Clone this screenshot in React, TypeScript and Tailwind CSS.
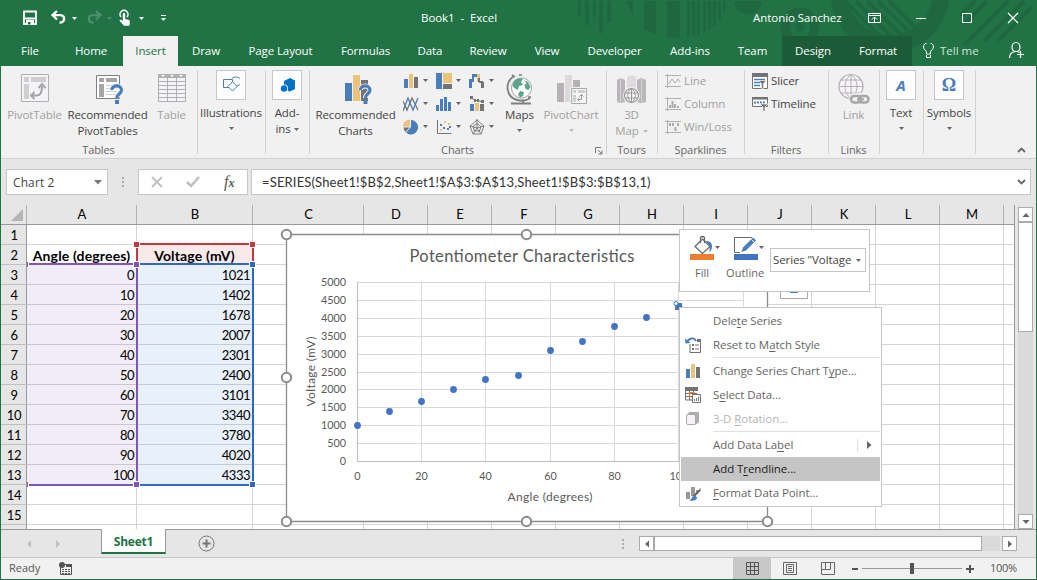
import type { ReactNode } from "react";

type IcProps = { x: number; y: number; w: number; h: number; className?: string; children: ReactNode };

function Ic({ x, y, w, h, className = "", children }: IcProps) {
  return (
    <svg width={w} height={h} viewBox={`${x} ${y} ${w} ${h}`} className={`shrink-0 ${className}`} fill="none">
      {children}
    </svg>
  );
}

function Caret({ className = "text-[#666]" }: { className?: string }) {
  return (
    <svg width="5" height="3" viewBox="0 0 5 3" className={`shrink-0 ${className}`}>
      <path d="M0 0h5L2.5 3z" fill="currentColor" />
    </svg>
  );
}

const BLUE = "#4a7ebb";
const SAND = "#e9c37c";
const DARK = "#737373";

/* ---------- title bar ---------- */

function Pattern() {
  return (
    <svg className="absolute left-[569px] top-0" width="466" height="66" viewBox="570 0 466 66" fill="#1f683f">
      <path d="M578 1h3v16h-3zM585 1h4v24h-4zM593 1h3v16h-3zM599 1h4v32h-4zM607 1h4v21h-4zM626 1h7v15zM644 1h12v33l-12-5zM667 1h13v37l-13-1zM687 1h3v36h-3z" />
      <path d="M692 1h3v35h-3zM697 1h3v34h-3zM703 1h3v32h-3zM708 1h3v29h-3zM713 1h3v25h-3zM718 1h3v19h-3zM723 1h3v11h-3zM734 1h28a14 13 0 0 1-28 0z" />
      <circle cx="800" cy="27" r="15" fill="none" stroke="#1f683f" strokeWidth="9" />
      <circle cx="800" cy="27" r="5" />
      <circle cx="890" cy="-7" r="51" fill="none" stroke="#1f683f" strokeWidth="17" />
      <g stroke="#1f683f" strokeWidth="4">
        <path d="M845 1l42 42M856 1l42 42M867 1l40 40M878 1l36 36M889 1l30 30" />
        <path d="M960 16l15-15M964 24l23-23M964 45l44-44M984 41l40-40M998 41l34-34" />
      </g>
    </svg>
  );
}

function TitleBar() {
  return (
    <div className="relative flex h-[36px] items-center pl-[21px] text-[11.5px] tracking-[-0.15px] text-white">
      <Ic x={22} y={9} w={16} h={18}>
        <path d="M24 11.5h12v12.500h-12z" stroke="#fff" strokeWidth="1.8" />
        <path d="M24 17.500h12v2h-12zM26 20h8v4h-8z" fill="#fff" />
        <path d="M28 22h2.500v2.500h-2.500z" fill="#217346" />
      </Ic>
      <Ic x={50} y={9} w={18} h={18} className="ml-[12px]">
        <path d="M57 11l-4.500 4 4.500 4.500M53 15.200h7.500c5 0 5 7.500-1 7.500" stroke="#fff" strokeWidth="2.300" />
      </Ic>
      <Caret className="ml-[4px] text-white" />
      <Ic x={86} y={9} w={18} h={18} className="ml-[9px]">
        <path d="M96 11l4.500 4-4.500 4.500M100 15.200h-7.500c-5 0-5 7.500 1 7.500" stroke="#4c9069" strokeWidth="2.300" />
      </Ic>
      <Caret className="ml-[3px] text-[#4c9069]" />
      <Ic x={117} y={8} w={16} h={20} className="ml-[5px]">
        <path d="M121 17a4 4 0 1 1 6 0" stroke="#fff" strokeWidth="1.500" />
        <path d="M122.800 13.500q1.200-1.400 2.400 0v5.500l3.800 1q1 .5.900 1.800l-.5 4h-5.500l-4.500-5.300q.8-1.400 2.200-.5l1.200 1z" fill="#fff" />
      </Ic>
      <Caret className="ml-[6px] text-white" />
      <Ic x={158} y={13} w={9} h={10} className="ml-[15px]">
        <path d="M160 15.500h5" stroke="#fff" />
        <path d="M160 18h5l-2.500 3z" fill="#fff" />
      </Ic>
      <span className="ml-[253px] w-[80px] whitespace-pre tracking-[-0.05px]">Book1  -  Excel</span>
      <span className="relative ml-[252px] w-[92px] whitespace-nowrap tracking-[-0.05px]">Antonio Sanchez</span>
      <Ic x={867} y={10} w={15} h={12} className="relative ml-[22px]">
        <path d="M868.500 11.500h12v9h-12zM868.500 13.500h12M874.500 20v-5M872 17.500l2.500-2.500 2.500 2.500" stroke="#fff" />
      </Ic>
      <Ic x={915} y={10} w={12} h={12} className="relative ml-[33px]">
        <path d="M916 16.500h10" stroke="#fff" />
      </Ic>
      <Ic x={961} y={10} w={12} h={12} className="relative ml-[34px]">
        <path d="M962.500 11.500h9v9h-9z" stroke="#fff" />
      </Ic>
      <Ic x={1007} y={10} w={12} h={12} className="relative ml-[34px]">
        <path d="M1008 11l10 10M1018 11l-10 10" stroke="#fff" strokeWidth="1.200" />
      </Ic>
    </div>
  );
}

const tabs: [string, string][] = [
  ["File", "w-[58px]"],
  ["Home", "w-[64px]"],
  ["Insert", "w-[55px] bg-[#f1f1f1] text-[#217346]"],
  ["Draw", "w-[56px]"],
  ["Page Layout", "w-[93px]"],
  ["Formulas", "w-[77px]"],
  ["Data", "w-[52px]"],
  ["Review", "w-[64px]"],
  ["View", "w-[54px]"],
  ["Developer", "w-[81px]"],
  ["Add-ins", "w-[70px]"],
  ["Team", "w-[57px] pr-[2px]"],
  ["Design", "w-[62px] bg-[#1c5b38]"],
  ["Format", "w-[68px] bg-[#1c5b38]"],
];

function TabRow() {
  return (
    <div className="relative flex h-[30px] text-[11.5px] tracking-[-0.1px] text-white">
      {tabs.map(([t, c]) => (
        <div key={t} className={`flex items-center justify-center whitespace-nowrap ${c}`}>
          {t}
        </div>
      ))}
      <div className="flex items-center gap-[6px] pl-[11px] text-[#d3e3da]">
        <Ic x={923} y={42} w={11} h={16}>
          <path d="M926.500 53v-2c0-1.500-3-2.500-3-5a5 4.500 0 0 1 10 0c0 2.500-3 3.500-3 5v2zM926.500 54v2.500h4v-2.500" stroke="#fff" />
        </Ic>
        <span className="tracking-[0px]">Tell me</span>
      </div>
      <Ic x={1008} y={41} w={17} h={18} className="ml-auto mr-[11px] mt-[5px]">
        <path d="M1012 47a4 4.500 0 1 1 8 0c0 3-2 4.500-4 4.500s-4-1.500-4-4.500zM1009.500 58c0-4 3-6 5.500-6.500M1020.500 51v7M1017 54.500h7M1017.500 51.500l2 1" stroke="#fff" strokeWidth="1.200" />
      </Ic>
    </div>
  );
}

/* ---------- ribbon icons ---------- */

function Question({ x, y }: { x: number; y: number }) {
  return (
    <g transform={`translate(${x} ${y})`}>
      <path d="M1.800 6c0-5.500 9.700-5.500 9.700 0 0 4-4.700 4-4.700 8" stroke="#f1f1f1" strokeWidth="5" />
      <path d="M1.800 6c0-5.500 9.700-5.500 9.700 0 0 4-4.700 4-4.700 8" stroke={BLUE} strokeWidth="3.200" />
      <path d="M5 16h4v4h-4z" fill={BLUE} />
    </g>
  );
}

const PivotIcon = (
  <Ic x={19} y={73} w={31} h={31}>
    <path d="M21.500 74.500h27v27h-27z" fill="#f6f3f8" stroke="#b0b0b0" />
    <path d="M24 77h5v5h-5zM24 84h5v15h-5zM31 77h15v5h-15z" fill="#cfcfcf" />
    <path d="M31.500 95.500h5c4 0 5.500-3 5.500-9M34.500 92l-3.500 3.500 3.500 3.500M38.500 88l3.500-4 3.500 4" stroke="#a5a5a5" strokeWidth="2" />
  </Ic>
);

const RecPivotIcon = (
  <Ic x={91} y={73} w={33} h={31}>
    <path d="M96.500 75.500h23v23h-23z" fill="#fff" stroke="#808080" />
    <path d="M99 78h5v4h-5zM99 84h5v13h-5zM106 78h11v4h-11z" fill="#a6a6a6" />
    <path d="M106 85.500h11M106 88.500h11M106 91.500h11M106 94.500h11" stroke="#d0d0d0" />
    <Question x={110} y={84} />
  </Ic>
);

const TableIcon = (
  <Ic x={156} y={73} w={31} h={31}>
    <path d="M158 74h28v28h-28z" fill="#b0b0b0" />
    <path d="M159 78h8v3h-8zM168 78h8v3h-8zM177 78h8v3h-8zM159 82h8v3h-8zM168 82h8v3h-8zM177 82h8v3h-8zM159 86h8v3h-8zM168 86h8v3h-8zM177 86h8v3h-8zM159 90h8v3h-8zM168 90h8v3h-8zM177 90h8v3h-8zM159 94h8v3h-8zM168 94h8v3h-8zM177 94h8v3h-8zM159 98h8v3h-8zM168 98h8v3h-8zM177 98h8v3h-8z" fill="#f6f3f8" />
    <path d="M161 75h4l-2 2zM170 75h4l-2 2zM179 75h4l-2 2z" fill="#fff" />
  </Ic>
);

const RecChartIcon = (
  <Ic x={338} y={73} w={35} h={31}>
    <path d="M345 83h7v18h-7z" fill={BLUE} />
    <path d="M353 75h7v26h-7z" fill={SAND} />
    <path d="M361 80h7v21h-7z" fill={DARK} />
    <Question x={358.500} y={84} />
  </Ic>
);

const smallCharts: ReactNode[] = [
  <g key="bars">
    <path d="M1 6h4v9h-4z" fill={BLUE} />
    <path d="M6 1h4v14h-4z" fill={SAND} />
    <path d="M11 4h4v11h-4z" fill={DARK} />
  </g>,
  <g key="tree">
    <path d="M0 0h6v16h-6z" fill={BLUE} />
    <path d="M7 0h9v10h-9z" fill={SAND} />
    <path d="M7 11h9v5h-9z" fill={DARK} />
  </g>,
  <g key="waterfall">
    <path d="M0 6h3v9h-3zM4 1h4v3h-4zM3 1h2v8h-2z" fill={BLUE} />
    <path d="M8 1h3v8h-3z" fill={SAND} />
    <path d="M9 5h2v4h-2zM12 9h3v6h-3zM10 8h4v2h-4z" fill={DARK} />
  </g>,
  <g key="line" strokeWidth="1.300">
    <path d="M0 5l4 9 5-12 6 12" stroke={DARK} />
    <path d="M0 15l5-13 5 12 5-12" stroke={BLUE} />
  </g>,
  <g key="hist">
    <path d="M0 9h3v6h-3zM4 3h3v12h-3zM8 1h3v14h-3zM12 6h3v9h-3z" fill={BLUE} />
  </g>,
  <g key="combo">
    <path d="M1 8h4v7h-4z" fill={BLUE} />
    <path d="M6 7h4v8h-4z" fill={SAND} />
    <path d="M11 8h4v7h-4z" fill={DARK} />
    <path d="M2 1.500l4 3h3l5 1.500" stroke={DARK} />
    <path d="M1 0h3v3h-3zM5 3h2v3h-2zM8 3h2v3h-2zM12 4h3v3h-3z" fill={DARK} />
  </g>,
  <g key="pie">
    <path d="M8 8V1a7.200 7.200 0 1 1-5 12.500z" fill={BLUE} />
    <path d="M7 7.500H0A7 7 0 0 1 7 .5z" fill={SAND} />
    <path d="M6.500 8.500H.500a7 7 0 0 0 2 4.500z" fill={DARK} />
  </g>,
  <g key="scatter">
    <path d="M1.500 1v13.500h14" stroke={DARK} />
    <path d="M4 5h2v2h-2zM7 8h2v2h-2zM11 9h2v2h-2z" fill={BLUE} />
    <path d="M8 2h2v2h-2zM12 4h2v2h-2zM4 10h2v2h-2z" fill={SAND} />
    <path d="M13 7h2v2h-2z" fill={BLUE} />
  </g>,
  <g key="radar" stroke={DARK}>
    <path d="M8 1l7 6-3 8H4L1 7zM8 4.500l4 3-1.500 4.500h-5L4 7.500zM8 0v9M8 9l7-2M8 9l4 6M8 9l-4 6M8 9L1 7" strokeWidth=".9" />
  </g>,
];

const MapsIcon = (
  <Ic x={504} y={72} w={31} h={32}>
    <circle cx="521.500" cy="87" r="10" fill="#fff" stroke="#8a8a8a" strokeWidth=".8" />
    <path d="M514 80c3-3 7-3.500 9-2l-2 3 2 3-4 1-1 4-4-2-1.500-3zM524 79l4 2 2.500 5-2 3-3-1-1-4 2-2zM520 90l4 1-1 4-3 1.500-2-3z" fill="#5ba58a" />
    <path d="M513.500 75.500c-9 5-8.500 22 6 24h4c4-.5 6.500-2 6.500-3.500M512 74l3 2M523 99v3M511 102.500h20" stroke="#808080" strokeWidth="1.800" />
    <path d="M519 74h3M528 96h3" stroke="#808080" strokeWidth="1.500" />
  </Ic>
);

const PivotChartIcon = (
  <Ic x={554} y={73} w={34} h={31}>
    <path d="M557 83h7v19h-7zM573 80h7v22h-7z" fill="#b5b2b5" />
    <path d="M565 75h7v27h-7z" fill="#dcd8dc" />
    <path d="M570 87h18v17h-18z" fill="#f1f1f1" />
    <path d="M571.500 88.500h15v15h-15z" fill="#f7f4f8" stroke="#aaa" />
    <path d="M573 90h3v3h-3zM578 90h7v3h-7zM573 95h3v7h-3z" fill="#cfcfcf" />
    <path d="M578 99.500h3.500v-4.500M579.500 97.500l-2 2 2 2M579.500 96.500l2-2 2 2" stroke="#999" />
  </Ic>
);

const Map3DIcon = (
  <Ic x={616} y={72} w={31} h={32}>
    <path d="M617 79l4-2 4 2v22l-4 1-4-1zM637 79l4-2 5 2v22l-5 1-4-1z" fill="#b9b6b9" />
    <path d="M627 76l4.500-2 4.500 2v20h-9z" fill="#dedade" />
    <path d="M620.500 78v23M641.500 78v23" stroke="#d6d3d6" />
    <circle cx="631.500" cy="94.500" r="8.500" fill="#f1f1f1" />
    <circle cx="631.500" cy="94.500" r="7" stroke="#999" strokeWidth="1.200" fill="#f7f4f8" />
    <path d="M631.500 87.500v14M625 92h13M625 97h13M631.500 87.500c-5 3-5 11 0 14M631.500 87.500c5 3 5 11 0 14" stroke="#999" />
  </Ic>
);

const LinkIcon = (
  <Ic x={837} y={73} w={33} h={32}>
    <circle cx="851" cy="86.500" r="12" stroke="#b2b0b2" strokeWidth="1.200" fill="#f7f4f8" />
    <path d="M851 74.500v24M839 86.500h24M841 80h20M841 93h20M851 74.500c-8 6-8 18 0 24M851 74.500c8 6 8 18 0 24" stroke="#b2b0b2" />
    <rect x="849" y="93" width="22" height="12" rx="6" fill="#f1f1f1" />
    <rect x="851" y="96" width="10" height="6.500" rx="3.200" stroke="#a8a8a8" strokeWidth="2.500" />
    <rect x="859" y="96" width="9.500" height="6.500" rx="3.200" stroke="#a8a8a8" strokeWidth="2.500" />
    <path d="M857 99.300h7" stroke="#a8a8a8" strokeWidth="2.200" />
  </Ic>
);

/* ---------- ribbon ---------- */

function Group({ w, label, children, extra }: { w: string; label?: string; children: ReactNode; extra?: ReactNode }) {
  return (
    <>
      <div className={`flex shrink-0 flex-col ${w}`}>
        <div className="flex h-[76px]">{children}</div>
        <div className="relative flex h-[16px] items-center justify-center pr-px text-[11px] tracking-[-0.1px] text-[#666]">
          {label}
          {extra}
        </div>
      </div>
      <div className="mt-[4px] h-[84px] w-px shrink-0 bg-[#d2d2d2]" />
    </>
  );
}

function Big({ w, icon, lines, arrow, inlineArrow, off }: { w: string; icon: ReactNode; lines: string[]; arrow?: boolean; inlineArrow?: boolean; off?: boolean }) {
  const color = off ? "text-[#a0a0a0]" : "text-[#444]";
  const ac = off ? "text-[#bbb]" : "text-[#666]";
  return (
    <div className={`flex shrink-0 flex-col items-center pr-px pt-[7px] leading-[16px] ${w} ${color}`}>
      <div className="flex h-[34px] items-start">{icon}</div>
      {lines.map((l, i) => (
        <div key={l} className="flex items-center gap-[4px] whitespace-nowrap">
          {l}
          {inlineArrow && i === lines.length - 1 && <Caret className={ac} />}
        </div>
      ))}
      {arrow && <Caret className={`mt-[6px] ${ac}`} />}
    </div>
  );
}

function Boxed({ icon, lines, arrow }: { icon: ReactNode; lines: string[]; arrow?: boolean }) {
  return (
    <div className="flex w-full flex-col items-center pr-px pt-[4px] leading-[16px] text-[#444]">
      <div className="mb-[5px] flex h-[30px] w-[30px] shrink-0 items-center justify-center border border-[#c6c6c6] bg-[#fdfdfd]">{icon}</div>
      {lines.map((l, i) => (
        <div key={l} className="flex items-center gap-[3px] whitespace-nowrap">
          {l}
          {!arrow && i === lines.length - 1 && <Caret />}
        </div>
      ))}
      {arrow && <Caret className="mt-[6px] text-[#666]" />}
    </div>
  );
}

function Spark({ label, children }: { label: string; children: ReactNode }) {
  return (
    <div className="flex h-[23px] items-center gap-[3px] text-[#a0a0a0]">
      <Ic x={0} y={0} w={16} h={14}>
        <path d="M2.500 0v14M0 1.500h16M0 12.500h16" stroke="#b0b0b0" />
        {children}
      </Ic>
      {label}
    </div>
  );
}

function Ribbon() {
  return (
    <div className="flex h-[92px] bg-[#f1f1f1] text-[11.5px] tracking-[-0.1px]">
      <Group w="w-[196px]" label="Tables">
        <Big w="w-[68px]" icon={PivotIcon} lines={["PivotTable"]} off />
        <Big w="w-[78px]" icon={RecPivotIcon} lines={["Recommended", "PivotTables"]} />
        <Big w="w-[50px]" icon={TableIcon} lines={["Table"]} off />
      </Group>
      <Group w="w-[67px]">
        <Boxed
          lines={["Illustrations"]}
          arrow
          icon={
            <Ic x={223} y={77} w={18} h={18}>
              <path d="M232 81.500a5 4.500 0 1 1 5 5.500" stroke={BLUE} />
              <path d="M224.500 80.500h9v8h-9z" stroke={BLUE} fill="#fdfdfd" />
              <path d="M233.500 82.500l4.500 5-4.500 4.500-4.500-4.500z" stroke={BLUE} fill="#fdfdfd" />
            </Ic>
          }
        />
      </Group>
      <Group w="w-[43px]">
        <Boxed
          lines={["Add-", "ins"]}
          icon={
            <Ic x={279} y={77} w={16} h={16}>
              <path d="M284 81l6-3 5 2.500v8.500l-5 2.500-6-2z" fill="#0072c6" />
              <circle cx="284" cy="88.500" r="4" fill="#fdfdfd" />
              <circle cx="284" cy="88.500" r="3.200" fill="#0072c6" />
            </Ic>
          }
        />
      </Group>
      <Group
        w="w-[296px]"
        label="Charts"
        extra={
          <Ic x={0} y={0} w={8} h={8} className="absolute right-[3px] top-[5px]">
            <path d="M.5 6V.500H6M3 3l4 4M7 3.500V7H3.500" stroke="#777" />
          </Ic>
        }
      >
        <Big w="w-[92px]" icon={RecChartIcon} lines={["Recommended", "Charts"]} />
        <div className="-mr-px grid w-[100px] grid-cols-3 grid-rows-[23px_23px_23px] pl-px pt-[3px]">
          {smallCharts.map((c, i) => (
            <div key={i} className="flex items-center gap-[3px]">
              <Ic x={0} y={0} w={17} h={16}>
                {c}
              </Ic>
              <Caret />
            </div>
          ))}
        </div>
        <Big w="w-[38px]" icon={MapsIcon} lines={["Maps"]} arrow />
        <Big w="w-[65px]" icon={PivotChartIcon} lines={["PivotChart"]} arrow off />
      </Group>
      <Group w="w-[50px]" label="Tours">
        <Big w="w-[50px]" icon={Map3DIcon} lines={["3D", "Map"]} inlineArrow off />
      </Group>
      <Group w="w-[86px]" label="Sparklines">
        <div className="pl-[7px] pt-[3px]">
          <Spark label="Line">
            <path d="M4 10l3-5 3 4 3-4 2 3" stroke="#aaa" />
          </Spark>
          <Spark label="Column">
            <path d="M5 11v-3M7.500 11v-7M10 11v-4M13 11v-2" stroke="#aaa" strokeWidth="2" />
          </Spark>
          <Spark label="Win/Loss">
            <path d="M5 3v3M8 3v3M10.500 7v4M13 3v3" stroke="#aaa" strokeWidth="2" />
          </Spark>
        </div>
      </Group>
      <Group w="w-[83px]" label="Filters">
        <div className="pl-[7px] pt-[3px] text-[#444]">
          <div className="flex h-[23px] items-center gap-[3px]">
            <Ic x={0} y={0} w={16} h={16}>
              <path d="M.5.500h15v15H.500z" fill="#fff" stroke={DARK} />
              <path d="M0 0h16v4H0z" fill={DARK} />
              <path d="M2 6.500h11M2 9.500h6M2 12.500h6" stroke={BLUE} strokeWidth="1.500" />
              <path d="M6.500 7.500h8l-3 3v5h-2v-5z" fill={DARK} stroke="#fff" strokeWidth=".6" />
            </Ic>
            Slicer
          </div>
          <div className="flex h-[23px] items-center gap-[3px]">
            <Ic x={0} y={0} w={16} h={14}>
              <path d="M.5.500h15v9H.500z" fill="#fff" stroke={DARK} />
              <path d="M0 0h16v2.500H0z" fill={DARK} />
              <path d="M2 5.500h11" stroke={BLUE} strokeWidth="2" strokeDasharray="2 1" />
              <path d="M8 7h8l-3 3v4h-2v-4z" fill={DARK} stroke="#fff" strokeWidth=".6" />
            </Ic>
            Timeline
          </div>
        </div>
      </Group>
      <Group w="w-[50px]" label="Links">
        <Big w="w-[50px]" icon={LinkIcon} lines={["Link"]} off />
      </Group>
      <Group w="w-[43px]">
        <Boxed lines={["Text"]} arrow icon={<span className="font-['Open_Sans',sans-serif] text-[15px] font-bold italic text-[#4a7ebb]">A</span>} />
      </Group>
      <Group w="w-[51px]">
        <Boxed lines={["Symbols"]} arrow icon={<span className="font-['Liberation_Serif',serif] text-[18px] font-bold text-[#4a7ebb]">Ω</span>} />
      </Group>
      <Ic x={0} y={0} w={9} h={6} className="ml-auto mr-[10px] mt-[81px]">
        <path d="M1 5l3.500-3.500L8 5" stroke="#666" strokeWidth="1.800" />
      </Ic>
    </div>
  );
}

/* ---------- formula bar ---------- */

function FormulaBar() {
  return (
    <div className="flex h-[46px] shrink-0 items-start border-t border-[#d2d2d2] bg-[#e6e6e6] pl-[5px] pt-[10px] font-['Lato',sans-serif] text-[13px] text-[#333]">
      <div className="flex h-[26px] w-[102px] items-center justify-between border border-[#c6c6c6] bg-white pl-[6px] pr-[5px] font-['Open_Sans',sans-serif] text-[12px] text-[#444]">
        <span className="pt-px tracking-[0.1px]">Chart 2</span>
        <svg width="8" height="5" viewBox="0 0 8 5">
          <path d="M0 0h8L4 4.500z" fill="#777" />
        </svg>
      </div>
      <Ic x={0} y={0} w={3} h={12} className="ml-[14px] mt-[7px]">
        <path d="M0 1h2v2H0zM0 5h2v2H0zM0 9h2v2H0z" fill="#aaa" />
      </Ic>
      <div className="ml-[13px] flex h-[26px] w-[110px] items-center border border-[#c6c6c6] bg-white">
        <Ic x={0} y={0} w={12} h={12} className="ml-[12px]">
          <path d="M1 1l10 10M11 1L1 11" stroke="#c0c0c0" strokeWidth="1.800" />
        </Ic>
        <Ic x={0} y={0} w={14} h={12} className="ml-[23px]">
          <path d="M1 6l4 4L13 1" stroke="#c0c0c0" strokeWidth="2.500" />
        </Ic>
        <span className="ml-[24px] font-['Liberation_Serif',serif] text-[16px] italic leading-[16px] text-[#555]">
          f<span className="text-[12px] font-bold">x</span>
        </span>
      </div>
      <div className="ml-[3px] flex h-[26px] w-[780px] items-center justify-between border border-[#c6c6c6] bg-white pl-[10px] pr-[4px]">
        <span className="whitespace-nowrap pt-[2px] tracking-[0.15px]">=SERIES(Sheet1!$B$2,Sheet1!$A$3:$A$13,Sheet1!$B$3:$B$13,1)</span>
        <Ic x={0} y={0} w={9} h={6}>
          <path d="M1 1l3.500 3.500L8 1" stroke="#666" strokeWidth="1.800" />
        </Ic>
      </div>
    </div>
  );
}

/* ---------- sheet ---------- */

const angles = [0, 10, 20, 30, 40, 50, 60, 70, 80, 90, 100];
const volts = [1021, 1402, 1678, 2007, 2301, 2400, 3101, 3340, 3780, 4020, 4333];

const columns: [string, string][] = [
  ["A", "w-[110px]"],
  ["B", "w-[116px]"],
  ["C", "w-[111px]"],
  ["D", "w-[64px]"],
  ["E", "w-[64px]"],
  ["F", "w-[64px]"],
  ["G", "w-[64px]"],
  ["H", "w-[64px]"],
  ["I", "w-[64px]"],
  ["J", "w-[64px]"],
  ["K", "w-[64px]"],
  ["L", "w-[64px]"],
  ["M", "w-[64px]"],
  ["", "w-[11px]"],
];

function cellText(col: string, row: number) {
  if (row === 2) return col === "A" ? "Angle (degrees)" : col === "B" ? "Voltage (mV)" : "";
  if (row < 3 || row > 13) return "";
  return col === "A" ? String(angles[row - 3]) : col === "B" ? String(volts[row - 3]) : "";
}

function cellTone(col: string, row: number) {
  if (row === 2 && col === "B") return "bg-[#f9e9e9] border-[#d8cccc]";
  if (row > 2 && row < 14 && col === "A") return "bg-[#f1edf8] border-[#c9c5d3]";
  if (row > 2 && row < 14 && col === "B") return "bg-[#e8f0fa] border-[#c3cbd6]";
  return "border-[#d4d4d4]";
}

function Sheet() {
  return (
    <div className="h-[325px] w-[1014px] overflow-hidden border-r border-[#999] bg-white font-['Lato',sans-serif] text-[13px] text-black">
      <div className="flex h-[20px] border-b border-[#999] bg-[#e6e6e6]">
        <div className="flex w-[26px] shrink-0 items-end justify-end border-r border-[#b1b1b1] pb-[3px] pr-[3px]">
          <svg width="12" height="12" viewBox="0 0 12 12">
            <path d="M12 0v12H0z" fill="#b4b4b4" />
          </svg>
        </div>
        {columns.map(([c, w]) => (
          <div key={c} className={`flex shrink-0 items-center justify-center border-r border-[#b1b1b1] pl-px last:border-r-0 ${w}`}>
            {c}
          </div>
        ))}
      </div>
      {Array.from({ length: 16 }, (_, i) => i + 1).map((row) => (
        <div key={row} className="flex h-[20px]">
          <div className="flex w-[26px] shrink-0 items-center justify-center border-b border-r border-b-[#c0c0c0] border-r-[#999] bg-[#e6e6e6] pl-px pt-[2px] tracking-[-0.4px]">{row < 16 ? row : ""}</div>
          {columns.map(([c, w]) => (
            <div
              key={c}
              className={`flex shrink-0 items-center border-b border-r pt-[2px] last:border-r-0 ${w} ${cellTone(c, row)} ${
                row === 2 ? "justify-center whitespace-nowrap text-[14px] font-bold tracking-[0.15px]" : "justify-end pr-[2px] tracking-[-0.5px]"
              }`}
            >
              {cellText(c, row)}
            </div>
          ))}
        </div>
      ))}
    </div>
  );
}

function RangeMarks() {
  return (
    <svg className="absolute left-[27px] top-[240px]" width="232" height="250" viewBox="27 240 232 250" fill="none" shapeRendering="crispEdges">
      <path d="M137 244h116v20" stroke="#c4373f" strokeWidth="2" />
      <path d="M137 244v20" stroke="#c4373f" strokeWidth="2" />
      <path d="M137 264h116v221H137" stroke="#3068c6" strokeWidth="2" />
      <path d="M27 264h110v221H27" stroke="#8055b7" strokeWidth="2" />
      <g stroke="#fff">
        <path d="M133.500 241.500h6v6h-6zM249.500 241.500h6v6h-6z" fill="#c4373f" />
        <path d="M133.500 261.500h6v6h-6zM133.500 481.500h6v6h-6zM23.500 261.500h5v6h-5zM23.500 481.500h5v6h-5z" fill="#8055b7" />
        <path d="M249.500 261.500h6v6h-6zM249.500 481.500h6v6h-6z" fill="#3068c6" />
      </g>
    </svg>
  );
}

/* ---------- embedded chart ---------- */

const plotX = [357.5, 389.5, 421.5, 453.5, 485.5, 518.5, 550.5, 582.5, 614.5, 646.5, 678.5];
const plotY = [425.5, 411.5, 401.5, 389.5, 379.5, 375.5, 350.5, 341.5, 326.5, 317.5, 306.5];

function Chart() {
  const rows = Array.from({ length: 11 }, (_, i) => Math.round(282 + i * 17.9) + 0.5);
  const cols = [421.5, 485.5, 550.5, 614.5, 678.5, 743.5];
  return (
    <svg className="absolute left-[280px] top-[228px] font-['Lato',sans-serif]" width="494" height="300" viewBox="280 228 494 300" fill="#595959">
      <path d="M286.500 234.500h481v287h-481z" fill="#fff" stroke="#8c8c8c" strokeWidth="1.300" />
      <g stroke="#d9d9d9">
        {rows.map((y) => (
          <path key={y} d={`M357 ${y}h387`} />
        ))}
        {cols.map((x) => (
          <path key={x} d={`M${x} 282v180`} />
        ))}
      </g>
      <path d="M357.500 282v179.500h387" fill="none" stroke="#bfbfbf" />
      <text x="522" y="262" textAnchor="middle" fontSize="16.500" textLength="225">
        Potentiometer Characteristics
      </text>
      <g fontSize="10.800" textAnchor="end">
        {rows.map((y, i) => (
          <text key={y} x="346" y={y + 3}>
            {5000 - i * 500}
          </text>
        ))}
      </g>
      <g fontSize="10.800" textAnchor="middle">
        {[357.5, 421.5, 485.5, 550.5, 614.5, 679].map((x, i) => (
          <text key={x} x={x} y="480">
            {i * 20}
          </text>
        ))}
      </g>
      <text x="550" y="501" textAnchor="middle" fontSize="12" textLength="85">
        Angle (degrees)
      </text>
      <text transform="translate(315 371.500) rotate(-90)" textAnchor="middle" fontSize="12" textLength="70">
        Voltage (mV)
      </text>
      <g fill="#4472c4">
        {plotX.map((x, i) => (
          <circle key={x} cx={x} cy={plotY[i]} r="3.400" />
        ))}
      </g>
      <path d="M675 303h7v7h-7z" fill="#6b7686" />
      <circle cx="679.500" cy="307" r="3" fill="#4472c4" />
      <circle cx="676" cy="303.500" r="2" fill="#fff" stroke="#1e88d8" />
      <g fill="#fff" stroke="#8c8c8c" strokeWidth="2">
        {[
          [286.5, 234.5],
          [526.5, 234.5],
          [286.5, 377.5],
          [286.5, 521.5],
          [526.5, 521.5],
          [767.5, 521.5],
        ].map(([x, y]) => (
          <circle key={`${x}-${y}`} cx={x} cy={y} r="4.700" />
        ))}
      </g>
    </svg>
  );
}

/* ---------- floating tools ---------- */

function MiniToolbar() {
  return (
    <div className="absolute left-[679px] top-[229px] flex h-[63px] w-[191px] border border-[#c6c6c6] bg-white text-[11px] text-[#666]">
      <div className="flex w-[47px] flex-col pl-[10px] pt-[5px]">
        <Ic x={690} y={235} w={31} h={26}>
          <path d="M702.500 239l7.500 7.500-7.500 7-7.500-7zM700.500 243v-5.500q2-2 4 0V243" stroke="#666" strokeWidth="1.200" />
          <path d="M706 241c5 0 6 3 6 5.500s-1 4-2.500 6q0-5 .5-6z" fill={BLUE} />
          <path d="M690 254h24v6h-24z" fill="#ed7d31" />
          <path d="M715 246h5l-2.500 3z" fill="#666" />
        </Ic>
        <span className="ml-[5px] mt-[4px]">Fill</span>
      </div>
      <div className="flex w-[40px] flex-col pl-[7px] pt-[5px]">
        <Ic x={734} y={235} w={31} h={26}>
          <path d="M752 237.500h-17.500v15H740" stroke="#666" />
          <path d="M741.500 252l1.500-4.500 10-10 3 3-10 10z" fill={BLUE} />
          <path d="M751.500 239.500l3 3" stroke="#fff" />
          <path d="M734 254h24v6h-24z" fill="#4472c4" />
          <path d="M759 246h5l-2.500 3z" fill="#666" />
        </Ic>
        <span className="ml-[-8px] mt-[4px] tracking-[0.1px]">Outline</span>
      </div>
      <div className="ml-[3px] mt-[18px] flex h-[24px] w-[96px] items-center justify-between border border-[#c6c6c6] pl-[2px] pr-[4px] text-[11.5px] tracking-[-0.1px] text-[#444]">
        <span className="whitespace-nowrap">Series "Voltage</span>
        <Caret />
      </div>
    </div>
  );
}

function Item({ pre, u, post, icon, state = "", tail }: { pre: string; u: string; post: string; icon?: ReactNode; state?: string; tail?: ReactNode }) {
  return (
    <div className={`mx-px flex h-[24px] items-center ${state}`}>
      <div className="flex w-[32px] shrink-0 pl-[4px]">{icon}</div>
      <span className="whitespace-nowrap">
        {pre}
        <span className="underline underline-offset-2">{u}</span>
        {post}
      </span>
      {tail}
    </div>
  );
}

function ContextMenu() {
  return (
    <div className="absolute left-[679px] top-[307px] h-[200px] w-[203px] border border-[#c6c6c6] bg-white pt-px text-[11.5px] tracking-[-0.08px] text-[#666]">
      <Item pre="Dele" u="t" post="e Series" />
      <Item
        pre="Reset to M"
        u="a"
        post="tch Style"
        icon={
          <Ic x={0} y={0} w={16} h={16}>
            <path d="M2 5c2-4 7-5 9-1" stroke={BLUE} strokeWidth="1.800" />
            <path d="M0 1.500l.5 5 5-.5z" fill={BLUE} />
            <path d="M5 7v8.500h10.500v-12H12" stroke={DARK} />
            <path d="M12 2h4v3h-4zM7 7h2v2H7zM7 11h2v2H7zM10 7.500h4v1h-4zM10 11.500h4v1h-4z" fill={DARK} />
          </Ic>
        }
      />
      <div className="ml-[33px] mr-px h-[2px] border-t border-[#e1e1e1]" />
      <Item pre="Change Series Chart T" u="y" post="pe..." icon={<Ic x={0} y={0} w={16} h={16}>{smallCharts[0]}</Ic>} />
      <Item
        pre="S"
        u="e"
        post="lect Data..."
        icon={
          <Ic x={0} y={0} w={16} h={16}>
            <path d="M0 0h13v4H0z" fill={DARK} />
            <path d="M.5 3v10H7M.500 6.500H12M.500 9.500H7M4.500 4v9M8.500 4v3" stroke={DARK} />
            <path d="M4.500 10V5.500h5" stroke="#ed7d31" strokeWidth="1.200" />
            <path d="M7.500 7.500h8v8h-8z" fill="#fff" stroke={DARK} />
            <path d="M9.500 14v-2M11.500 14v-3M13.500 14V9.500" stroke={DARK} />
          </Ic>
        }
      />
      <Item
        pre="3-D "
        u="R"
        post="otation..."
        state="text-[#b5b5b5]"
        icon={
          <Ic x={0} y={0} w={16} h={16}>
            <path d="M2 3.500L5 1.500h8.500v9.500l-3 2.500" fill="#b0b0b0" stroke="#aaa" />
            <rect x="1.500" y="3.500" width="9" height="10" rx="1.500" fill="#f7f4f8" stroke="#aaa" />
          </Ic>
        }
      />
      <div className="ml-[33px] mr-px h-[2px] border-t border-[#e1e1e1]" />
      <Item
        pre="Add Data La"
        u="b"
        post="el"
        tail={
          <div className="ml-auto flex h-[13px] items-center border-l border-[#e1e1e1] pl-[9px] pr-[8px]">
            <svg width="5" height="8" viewBox="0 0 5 8">
              <path d="M0 0l4.500 4L0 8z" fill="#666" />
            </svg>
          </div>
        }
      />
      <Item pre="Add T" u="r" post="endline..." state="bg-[#c5c5c5] text-[#222]" />
      <Item
        pre=""
        u="F"
        post="ormat Data Point..."
        icon={
          <Ic x={0} y={0} w={16} h={16}>
            <path d="M1 7h4v7H1zM6 2h4v9H6zM11 5h2v4h-2z" fill="#999" />
            <path d="M15.500 3v3l-6 6-1.500-1.500z" fill="#666" />
            <path d="M4 15.500c3-1 3-5 6-5l2 2c0 3-4 3.500-8 3z" fill={BLUE} />
          </Ic>
        }
      />
    </div>
  );
}

/* ---------- scrollbars and bottom bars ---------- */

function ScrollBtn({ d }: { d: string }) {
  return (
    <div className="flex h-[15px] w-[15px] shrink-0 items-center justify-center border border-[#ababab] bg-white">
      <svg width="8" height="8" viewBox="0 0 8 8">
        <path d={d} fill="#666" />
      </svg>
    </div>
  );
}

function VScroll() {
  return (
    <div className="ml-[3px] mt-[2px] flex h-[322px] w-[15px] flex-col bg-[#dadada]">
      <ScrollBtn d="M.5 6h7L4 2z" />
      <div className="h-[110px] border border-[#ababab] bg-white" />
      <div className="flex-1" />
      <ScrollBtn d="M.5 2h7L4 6z" />
    </div>
  );
}

function SheetTabs() {
  return (
    <div className="flex h-[29px] shrink-0 border-b border-t border-b-[#c6c6c6] border-t-[#999] bg-[#e6e6e6]">
      <div className="flex w-[100px] items-center pl-[26px]">
        <svg width="34" height="8" viewBox="0 0 34 8">
          <path d="M4 0v8L0 4zM29 0v8l4-4z" fill="#c0c0c0" />
        </svg>
      </div>
      <div className="-mt-px flex h-[25px] w-[65px] items-center justify-center border-x border-b-2 border-x-[#999] border-b-[#217346] bg-white pt-[3px] text-[12px] font-bold tracking-[-0.2px] text-[#217346]">Sheet1</div>
      <Ic x={0} y={0} w={17} h={17} className="ml-[32px] mt-[5px]">
        <circle cx="8.500" cy="8.500" r="7.500" stroke="#777" />
        <path d="M8.500 4.500v8M4.500 8.500h8" stroke="#777" strokeWidth="2" />
      </Ic>
      <div className="ml-auto mr-[19px] flex items-center">
        <Ic x={0} y={0} w={3} h={12} className="mr-[14px]">
          <path d="M0 1h2v2H0zM0 5h2v2H0zM0 9h2v2H0z" fill="#aaa" />
        </Ic>
        <ScrollBtn d="M6 .5v7L2 4z" />
        <div className="h-[15px] w-[328px] border border-[#ababab] bg-white" />
        <div className="mr-[2px] h-[15px] w-[18px] bg-[#dadada]" />
        <ScrollBtn d="M2 .5v7L6 4z" />
      </div>
    </div>
  );
}

function StatusBar() {
  return (
    <div className="flex h-[21px] items-center bg-[#f1f1f1] pl-[8px] text-[11px] text-[#555]">
      <span className="w-[50px] pb-px">Ready</span>
      <Ic x={0} y={0} w={13} h={13}>
        <path d="M1.500 5v7.500h11V2.500H6" stroke="#555" />
        <circle cx="3" cy="3" r="3" fill="#555" />
        <path d="M7 2h6v3H7zM3 7h2v1H3zM6 7h2v1H6zM9 7h2v1H9zM3 9h2v1H3zM6 9h2v1H6zM9 9h2v1H9zM3 11h2v1H3zM6 11h2v1H6zM9 11h2v1H9z" fill="#555" />
      </Ic>
      <div className="ml-auto flex h-full w-[38px] items-center justify-center bg-[#c8c8c8]">
        <Ic x={0} y={0} w={13} h={13}>
          <path d="M.5.500h12v12H.500zM4.500 0v13M8.500 0v13M0 4.500h13M0 8.500h13" stroke="#555" />
        </Ic>
      </div>
      <Ic x={0} y={0} w={14} h={13} className="ml-[12px]">
        <path d="M.5.500h13v12H.500zM3.500 2.500h7v8h-7zM5 4.500h4M5 6.500h4M5 8.500h4" stroke="#666" />
      </Ic>
      <Ic x={0} y={0} w={14} h={13} className="ml-[24px]">
        <path d="M.5.500h13v12H.500zM4.500 0v7.500h5V0M4.500 7.500H0" stroke="#666" />
      </Ic>
      <Ic x={851} y={560} w={124} h={16} className="ml-[16px]">
        <path d="M852 568h6M966 568h8M970 564v8" stroke="#555" strokeWidth="2" />
        <path d="M862 567.500h100" stroke="#999" />
        <path d="M910 562h4v11h-4z" fill="#555" />
      </Ic>
      <span className="ml-[15px] w-[46px] pb-px tracking-[-0.3px]">100%</span>
    </div>
  );
}

export default function App() {
  return (
    <div className="relative flex h-[580px] w-[1037px] flex-col overflow-hidden border-x border-b border-[#217346] bg-[#e6e6e6] font-['Open_Sans',sans-serif]">
      <div className="relative h-[66px] shrink-0 bg-[#217346]">
        <Pattern />
        <TitleBar />
        <TabRow />
      </div>
      <Ribbon />
      <FormulaBar />
      <div className="mt-px flex h-[324px] shrink-0">
        <Sheet />
        <VScroll />
      </div>
      <SheetTabs />
      <StatusBar />
      <div className="absolute left-0 top-0 ml-[-1px]">
        <RangeMarks />
        <Chart />
        <div className="absolute left-[780px] top-[270px] flex h-[29px] w-[28px] items-end justify-center border border-[#ababab] bg-white pb-[5px]">
          <div className="h-[3px] w-[8px] bg-[#4a7ebb]" />
        </div>
        <MiniToolbar />
        <ContextMenu />
      </div>
    </div>
  );
}
